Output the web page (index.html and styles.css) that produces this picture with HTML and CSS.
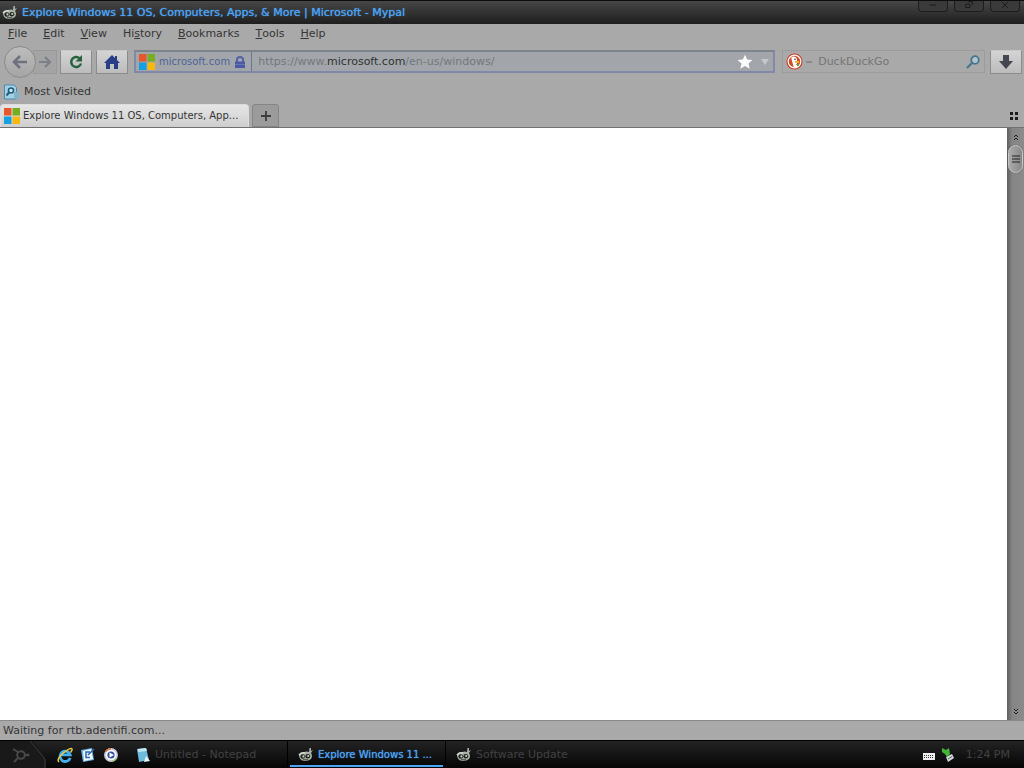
FILE: index.html
```html
<!DOCTYPE html>
<html lang="en">
<head>
  <meta charset="UTF-8">
  <meta name="viewport" content="width=device-width, initial-scale=1.0">
  <title>Explore Windows 11 OS, Computers, Apps, &amp; More | Microsoft - Mypal</title>
  <link rel="stylesheet" href="styles.css">
</head>
<body>

  <!-- shared icons -->
  <svg class="defs" aria-hidden="true">
    <symbol id="mypal" viewBox="0 0 16 16">
      <path d="M1 8Q2 5 6 5Q9 4 11 5L11.5 1H13L13 4L15 3L13 6Q15 9 13 12Q10 14.5 6 14Q1 13 1 8Z" fill="#a9b0a5"/>
      <path d="M1 8Q3 5 7 6" fill="none" stroke="#d5dad0" stroke-width="1.4"/>
      <ellipse cx="4.8" cy="9.5" rx="2.4" ry="2.2" fill="#20241f"/>
      <ellipse cx="9.8" cy="9.2" rx="2.4" ry="2.2" fill="#20241f"/>
      <circle cx="5.4" cy="9.4" r="1.1" fill="#c9d0c4"/>
      <circle cx="10.2" cy="9" r="1.1" fill="#c9d0c4"/>
      <path d="M5 12.8H10" stroke="#3a3f38"/>
    </symbol>
    <symbol id="windows" viewBox="0 0 16 16">
      <path d="M0 0H7.5V7.5H0Z" fill="#e8562c"/>
      <path d="M8.5 0H16V7.5H8.5Z" fill="#76ae22"/>
      <path d="M0 8.5H7.5V16H0Z" fill="#16a0e4"/>
      <path d="M8.5 8.5H16V16H8.5Z" fill="#f8b80e"/>
    </symbol>
  </svg>

  <header class="title-bar">
    <svg class="icon"><use href="#mypal"/></svg>
    <h1>Explore Windows 11 OS, Computers, Apps, &amp; More | Microsoft - Mypal</h1>
    <div class="window-buttons">
      <button type="button" aria-label="Minimize"><svg viewBox="0 0 12 12"><path d="M2 6H10"/></svg></button>
      <button type="button" aria-label="Restore"><svg viewBox="0 0 12 12"><path d="M5 2H10V6M2 5H7V9H2Z"/></svg></button>
      <button type="button" aria-label="Close"><svg viewBox="0 0 12 12"><path d="M2 2L10 10M10 2L2 10"/></svg></button>
    </div>
  </header>

  <nav class="menu-bar">
    <button type="button"><u>F</u>ile</button>
    <button type="button"><u>E</u>dit</button>
    <button type="button"><u>V</u>iew</button>
    <button type="button">Hi<u>s</u>tory</button>
    <button type="button"><u>B</u>ookmarks</button>
    <button type="button"><u>T</u>ools</button>
    <button type="button"><u>H</u>elp</button>
  </nav>

  <div class="nav-bar">
    <div class="history-buttons">
      <button type="button" class="back" aria-label="Back">
        <svg class="icon" viewBox="0 0 16 16"><path d="M8 2L2 8L8 14M2 8H15" fill="none" stroke="#6d727e" stroke-width="2.6"/></svg>
      </button>
      <button type="button" class="forward" aria-label="Forward">
        <svg viewBox="0 0 12 12"><path d="M6 1L11 6L6 11M11 6H0" fill="none" stroke="#7b808a" stroke-width="2.2"/></svg>
      </button>
    </div>
    <button type="button" class="tool-button" aria-label="Reload">
      <svg class="icon" viewBox="0 0 16 16"><path d="M11.5 4.2A5 5 0 1 0 13 9.5" fill="none" stroke="#24613c" stroke-width="2.4"/><path d="M14 1V7.5H7.5Z" fill="#24613c"/></svg>
    </button>
    <button type="button" class="tool-button" aria-label="Home">
      <svg class="icon" viewBox="0 0 16 16"><path d="M8 1L11 4V2H13V6L16 9H14V15H10V10H6V15H2V9H0Z" fill="#283f87"/></svg>
    </button>

    <div class="url-bar">
      <div class="identity">
        <svg class="icon"><use href="#windows"/></svg>
        <span>microsoft.com</span>
        <svg viewBox="0 0 12 12"><path d="M3 6V3.5Q3 1 6 1Q9 1 9 3.5V6" fill="none" stroke="#5662a8" stroke-width="2"/><path d="M1 5.5H11V12H1Z" fill="#4c59a6"/><path d="M1 8.5H11" stroke="#6974b2"/></svg>
      </div>
      <a class="url" href="#">https://www.<b>microsoft.com</b>/en-us/windows/</a>
      <button type="button" aria-label="Bookmark this page">
        <svg class="icon" viewBox="0 0 16 16"><path d="M8 0.8L10.2 5.6L15.4 6.1L11.5 9.6L12.7 14.8L8 12.1L3.3 14.8L4.5 9.6L0.6 6.1L5.8 5.6Z" fill="#fbfbfb"/></svg>
      </button>
      <button type="button" aria-label="Show history">
        <svg class="small" viewBox="0 0 8 8"><path d="M0 1H8L4 7Z" fill="#c6c8cc"/></svg>
      </button>
    </div>

    <form class="search-bar">
      <svg class="engine" viewBox="0 0 18 18">
        <circle cx="9" cy="9" r="8.5" fill="#c83c24"/>
        <circle cx="9" cy="9" r="6.7" fill="#d04b2c" stroke="#fff" stroke-width="1.3"/>
        <path d="M5.5 5Q8 2.5 11 5Q12.5 8 11.5 10L12 14.5Q10 15.5 8 14.5Z" fill="#fff"/>
        <path d="M9.5 8.5H14V10.5H9.5Z" fill="#f3b51c"/>
        <path d="M10 12L13.5 11.5V14Z" fill="#58a33c"/>
        <circle cx="9.5" cy="6.5" r="0.8" fill="#333"/>
      </svg>
      <svg class="small" viewBox="0 0 8 8"><path d="M1 4H7" stroke="#686868"/></svg>
      <input type="text" aria-label="Search" placeholder="DuckDuckGo">
      <button type="submit" aria-label="Search">
        <svg class="icon" viewBox="0 0 16 16"><circle cx="10" cy="6" r="3.8" fill="#b5c3cb" stroke="#48758e" stroke-width="1.8"/><path d="M7.2 8.8L2 14" stroke="#48758e" stroke-width="2.2"/></svg>
      </button>
    </form>

    <button type="button" class="tool-button" aria-label="Downloads">
      <svg class="icon" viewBox="0 0 16 16"><path d="M5 1H11V7H15L8 15L1 7H5Z" fill="#444751"/></svg>
    </button>
  </div>

  <div class="bookmarks-bar">
    <button type="button">
      <svg class="icon" viewBox="0 0 16 16"><path d="M1.5 1H11L13.5 3.5V15H1.5Z" fill="#a4d0e4" stroke="#4b8bad"/><path d="M11 8H16V15H11Z" fill="#83b2cb"/><circle cx="8" cy="6.5" r="2.5" fill="#d5eaf3" stroke="#235c7b" stroke-width="1.6"/><path d="M6 8.5L3.5 11.5" stroke="#235c7b" stroke-width="2"/></svg>
      Most Visited
    </button>
  </div>

  <div class="tab-bar">
    <button type="button" class="tab">
      <svg class="icon"><use href="#windows"/></svg>
      <span>Explore Windows 11 OS, Computers, App...</span>
    </button>
    <button type="button" class="new-tab" aria-label="Open a new tab">
      <svg viewBox="0 0 12 12"><path d="M6 1V11M1 6H11" stroke="#3c3c3c" stroke-width="1.8"/></svg>
    </button>
    <button type="button" class="all-tabs" aria-label="List all tabs">
      <svg viewBox="0 0 12 12"><path d="M2 2H5V5H2ZM7 2H10V5H7ZM2 7H5V10H2ZM7 7H10V10H7Z" fill="#1c1c1c"/></svg>
    </button>
  </div>

  <div class="content">
    <main class="page"></main>
    <div class="scrollbar">
      <button type="button" aria-label="Scroll up"><svg class="small" viewBox="0 0 8 8"><path d="M2 4L4 2L6 4M2 7L4 5L6 7"/></svg></button>
      <div class="thumb"><svg class="small" viewBox="0 0 8 8"><path d="M0 1H8M0 4H8M0 7H8"/></svg></div>
      <button type="button" class="down" aria-label="Scroll down"><svg class="small" viewBox="0 0 8 8"><path d="M2 1L4 3L6 1M2 4L4 6L6 4"/></svg></button>
    </div>
  </div>

  <div class="status-bar">Waiting for rtb.adentifi.com...</div>

  <footer class="taskbar">
    <button type="button" class="start" aria-label="Start">
      <svg viewBox="0 0 48 27">
        <path d="M0 0H33L46 18V27H0Z" fill="#191919"/>
        <path d="M30 0L45 18V27" fill="none" stroke="#3b3b3b"/>
        <circle cx="21" cy="14" r="3.8" fill="none" stroke="#484848" stroke-width="2"/>
        <path d="M13 8L18 11M14 21L18 17M25 14H27" stroke="#484848" stroke-width="2"/>
        <circle cx="28" cy="14" r="1.4" fill="#484848"/>
      </svg>
    </button>
    <div class="quick-launch">
      <button type="button" aria-label="Internet Explorer">
        <svg class="icon" viewBox="0 0 16 16"><path d="M13.2 10.8A5.2 5.2 0 1 1 13.2 7.8H4.5" fill="none" stroke="#42b0ee" stroke-width="2.8"/><path d="M2 15Q-1 12 7 5.5Q14 0 15 2Q15.5 3 13.5 5.5" fill="none" stroke="#f1c83c" stroke-width="1.5"/></svg>
      </button>
      <button type="button" aria-label="Show Desktop">
        <svg class="icon" viewBox="0 0 16 16"><path d="M1 3L12 1L14 13L3 15Z" fill="#69b4e8"/><path d="M3 4L11 2L13 12L4 14Z" fill="#f2f8fc"/><path d="M10 5H6V10.5H10M8 8L14 2" fill="none" stroke="#286aad" stroke-width="1.5"/></svg>
      </button>
      <button type="button" aria-label="Media Player">
        <svg class="icon" viewBox="0 0 16 16"><circle cx="8" cy="8" r="6.2" fill="#f5f7fc" stroke="#c4c9d8" stroke-width="1.5"/><path d="M2.6 5A6.2 6.2 0 0 1 8 1.8" fill="none" stroke="#e3773a" stroke-width="1.5"/><path d="M13.4 11A6.2 6.2 0 0 1 8 14.2" fill="none" stroke="#a5c878" stroke-width="1.5"/><circle cx="8" cy="8" r="3.6" fill="#344fa0"/><path d="M6.5 5.5L11 8L6.5 10.5Z" fill="#fff"/></svg>
      </button>
    </div>
    <div class="tasks">
      <button type="button">
        <svg class="icon" viewBox="0 0 16 16"><path d="M2 2L11 1L14 13L4 15Z" fill="#6dbbdd"/><path d="M3 2L11 1L12 4L3 5Z" fill="#c5e7f3"/><path d="M11 9L15 14L9 15Z" fill="#e6f4f9"/></svg>
        <span>Untitled - Notepad</span>
      </button>
      <button type="button" class="active">
        <svg class="icon"><use href="#mypal"/></svg>
        <span>Explore Windows 11 ...</span>
      </button>
      <button type="button">
        <svg class="icon"><use href="#mypal"/></svg>
        <span>Software Update</span>
      </button>
    </div>
    <div class="tray">
      <svg class="icon" viewBox="0 0 16 16"><path d="M2 6H14V13H2Z" fill="#eee"/><path d="M3 8.5H13M3 10.5H13" stroke="#333" stroke-dasharray="1 1"/></svg>
      <svg class="icon" viewBox="0 0 16 16"><path d="M6 10L12 7L14 11L8 15Z" fill="#d4d9dc"/><path d="M8 12L12 9.5" stroke="#5a6267"/><path d="M2 1L6 3L9 1L10 7L7 10L5 7L2 5Z" fill="#43b436"/></svg>
      <time>1:24 PM</time>
    </div>
  </footer>

</body>
</html>
```
FILE: styles.css
```css
* {
  margin: 0;
  padding: 0;
  box-sizing: border-box;
}

body {
  display: flex;
  flex-direction: column;
  min-height: 100vh;
  background: #a9a9a9;
  color: #353535;
  font-family: "DejaVu Sans", sans-serif;
  font-size: 11px;
  line-height: 16px;
}

button,
input {
  font: inherit;
  color: inherit;
  background: none;
  border: none;
}

button {
  display: flex;
  align-items: center;
  justify-content: center;
  white-space: nowrap;
}

svg {
  display: block;
  flex: none;
  width: 12px;
  height: 12px;
}

.defs {
  position: absolute;
  width: 0;
  height: 0;
}

.icon {
  width: 16px;
  height: 16px;
}

.small {
  width: 8px;
  height: 8px;
}

/* title bar */
.title-bar {
  display: flex;
  align-items: center;
  gap: 4px;
  height: 24px;
  padding: 0 4px 0 2px;
  background: linear-gradient(#474747, #1e1e1e);
  border-top: 1px solid #0c0c0c;
}

.title-bar h1 {
  flex: 1;
  min-width: 0;
  overflow: hidden;
  white-space: nowrap;
  font-size: 11px;
  font-weight: normal;
  color: #4ba3f3;
  text-shadow: 0 0 1px #4ba3f3;
}

.window-buttons {
  display: flex;
  align-self: flex-start;
  gap: 6px;
}

.window-buttons button {
  width: 30px;
  height: 11px;
  padding-bottom: 3px;
  background: #3a3a3a;
  border: 1px solid #1c1c1c;
  border-top: none;
  border-radius: 0 0 4px 4px;
}

.window-buttons svg {
  width: 10px;
  height: 10px;
  fill: none;
  stroke: #161616;
}

/* menu */
.menu-bar {
  display: flex;
  gap: 16px;
  height: 20px;
  padding-left: 8px;
}

/* navigation */
.nav-bar {
  display: flex;
  align-items: center;
  height: 35px;
  padding: 0 2px 0 4px;
}

.history-buttons {
  display: flex;
  align-items: center;
  margin-right: 3px;
}

.back {
  z-index: 1;
  width: 32px;
  height: 32px;
  background: linear-gradient(#bdbdbd, #a5a5a5);
  border: 1px solid #8b8b8b;
  border-radius: 50%;
}

.forward {
  width: 24px;
  height: 24px;
  margin-left: -3px;
  background: #a4a4a4;
  border: 1px solid #999;
}

.tool-button {
  width: 32px;
  height: 24px;
  margin-right: 4px;
  background: linear-gradient(#d4d4d4, #bcbcbc);
  border: 1px solid #8c8c8c;
  border-top-color: #c8c8c8;
}

.tool-button:last-child {
  margin: 0 0 0 5px;
}

.url-bar {
  display: flex;
  align-items: center;
  flex: 13;
  min-width: 0;
  height: 23px;
  margin: 0 7px 0 2px;
  padding-right: 4px;
  background: #a2a6aa;
  border: 2px solid #8089a8;
  border-top-color: #7c858c;
}

.identity {
  display: flex;
  align-items: center;
  gap: 4px;
  height: 100%;
  padding: 0 5px 0 3px;
  border-right: 1px solid #69769a;
  font-size: 10px;
  color: #4f6496;
}

.url {
  flex: 1;
  min-width: 0;
  overflow: hidden;
  white-space: nowrap;
  padding-left: 6px;
  font-size: 11px;
  color: #74777a;
  text-decoration: none;
}

.url b {
  font-weight: normal;
  color: #303234;
}

.url-bar button + button {
  margin-left: 8px;
}

.search-bar {
  display: flex;
  align-items: center;
  flex: 4;
  min-width: 0;
  height: 23px;
  padding: 0 3px;
  border: 1px solid #9c9c9c;
}

.engine {
  width: 17px;
  height: 17px;
  margin-right: 2px;
}

.search-bar input {
  flex: 1;
  min-width: 0;
  padding-left: 5px;
}

.search-bar input::placeholder {
  color: #767676;
  opacity: 1;
}

/* bookmarks */
.bookmarks-bar {
  display: flex;
  align-items: center;
  height: 25px;
  padding-left: 3px;
}

.bookmarks-bar button {
  gap: 5px;
}

/* tabs */
.tab-bar {
  display: flex;
  align-items: center;
  gap: 3px;
  height: 24px;
  padding-right: 4px;
  border-bottom: 1px solid #707070;
}

.tab {
  justify-content: flex-start;
  gap: 3px;
  width: 249px;
  height: 23px;
  padding: 0 3px;
  background: linear-gradient(#e6e6e6, #cecece);
  border: 1px solid #ddd;
  border-bottom: none;
  border-radius: 4px 4px 0 0;
  font-size: 10px;
}

.new-tab {
  width: 27px;
  height: 23px;
  background: #9b9b9b;
  border: 1px solid #858585;
  border-radius: 3px 3px 0 0;
}

.all-tabs {
  margin-left: auto;
}

/* page */
.content {
  display: flex;
  flex: 1;
}

.page {
  flex: 1;
  background: #fff;
}

.scrollbar {
  display: flex;
  flex-direction: column;
  align-items: center;
  width: 17px;
  background: linear-gradient(90deg, #5e5e5e, #858585 30%, #8b8b8b);
}

.scrollbar button {
  width: 17px;
  height: 17px;
}

.scrollbar svg {
  fill: none;
  stroke: #202020;
}

.scrollbar .down {
  margin-top: auto;
}

.thumb {
  display: flex;
  align-items: center;
  justify-content: center;
  width: 15px;
  height: 28px;
  background: linear-gradient(90deg, #aaa, #888);
  border: 1px solid #c6c6c6;
  border-radius: 8px;
  box-shadow: 0 0 1px #333;
}

/* status */
.status-bar {
  height: 20px;
  padding: 2px 3px;
  border-top: 1px solid #8a8a8a;
}

/* taskbar */
.taskbar {
  display: flex;
  align-items: center;
  height: 28px;
  background: linear-gradient(#232323, #050505);
  border-top: 1px solid #000;
}

.start svg {
  width: 48px;
  height: 27px;
}

.quick-launch {
  display: flex;
  gap: 7px;
  margin: 0 16px 0 9px;
}

.tasks {
  display: flex;
  flex: 1;
  height: 100%;
}

.tasks button {
  justify-content: flex-start;
  gap: 4px;
  width: 158px;
  padding-left: 10px;
  border-right: 1px solid #000;
  color: #424242;
}

.tasks button:first-child {
  width: 153px;
  padding-left: 0;
}

.tasks button:last-child {
  border-right: none;
}

.tasks .active {
  font-size: 10px;
  color: #4ba3f3;
  text-shadow: 0 0 1px #4ba3f3;
  background: linear-gradient(#4ba3f3, #4ba3f3) 2px 24px / 153px 2px no-repeat;
}

.tray {
  display: flex;
  align-items: center;
  gap: 3px;
  padding-right: 14px;
  color: #424242;
}

.tray time {
  margin-left: 7px;
}
```
